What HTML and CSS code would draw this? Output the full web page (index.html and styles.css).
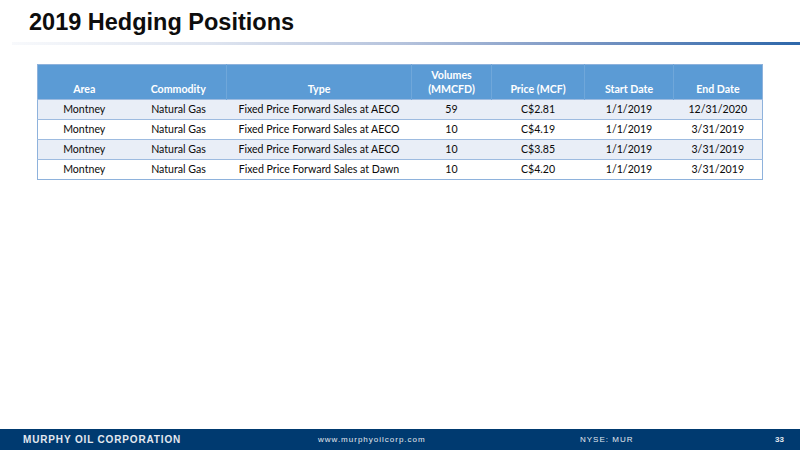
FILE: index.html
```html
<!DOCTYPE html>
<html>
<head>
<meta charset="utf-8">
<link rel="stylesheet" href="styles.css">
</head>
<body>
<div class="slide">
  <header class="head">
    <h1 class="title">2019 Hedging Positions</h1>
    <div class="rule"></div>
  </header>
  <main class="content">
    <table class="hedge">
      <colgroup>
        <col class="c-area"><col class="c-comm"><col class="c-type"><col class="c-vol"><col class="c-price"><col class="c-start"><col class="c-end">
      </colgroup>
      <thead>
        <tr>
          <th>Area</th>
          <th class="nosep">Commodity</th>
          <th>Type</th>
          <th>Volumes<br>(MMCFD)</th>
          <th>Price (MCF)</th>
          <th>Start Date</th>
          <th>End Date</th>
        </tr>
      </thead>
      <tbody>
        <tr class="alt"><td>Montney</td><td>Natural Gas</td><td>Fixed Price Forward Sales at AECO</td><td>59</td><td>C$2.81</td><td>1/1/2019</td><td>12/31/2020</td></tr>
        <tr><td>Montney</td><td>Natural Gas</td><td>Fixed Price Forward Sales at AECO</td><td>10</td><td>C$4.19</td><td>1/1/2019</td><td>3/31/2019</td></tr>
        <tr class="alt"><td>Montney</td><td>Natural Gas</td><td>Fixed Price Forward Sales at AECO</td><td>10</td><td>C$3.85</td><td>1/1/2019</td><td>3/31/2019</td></tr>
        <tr><td>Montney</td><td>Natural Gas</td><td>Fixed Price Forward Sales at Dawn</td><td>10</td><td>C$4.20</td><td>1/1/2019</td><td>3/31/2019</td></tr>
      </tbody>
    </table>
  </main>
  <footer class="foot">
    <span class="corp">MURPHY OIL CORPORATION</span>
    <span class="web">www.murphyoilcorp.com</span>
    <span class="nyse">NYSE: MUR</span>
    <span class="page">33</span>
  </footer>
</div>
</body>
</html>
```
FILE: styles.css
```css
html, body {
  margin: 0;
  padding: 0;
  background: #ffffff;
}
.slide {
  width: 800px;
  height: 450px;
  display: flex;
  flex-direction: column;
  overflow: hidden;
}
.head {
  padding-top: 8px;
}
.title {
  margin: 0 0 0 29px;
  font-family: "Liberation Sans", Arial, sans-serif;
  font-weight: bold;
  font-size: 23.5px;
  line-height: 28px;
  color: #0d0d0d;
}
.rule {
  margin-top: 6px;
  margin-left: 12px;
  height: 3px;
  background: linear-gradient(to right, rgba(230,235,244,0.3) 0%, #dfe5f0 25%, #b4c2dc 50%, #7b97c4 72%, #2d67aa 100%);
}
.content {
  flex: 1;
  padding: 19px 0 0 37px;
}
.hedge {
  width: 726px;
  border-collapse: collapse;
  font-family: Lato, "Open Sans", sans-serif;
  font-size: 10.6px;
  color: #0a0a0a;
  border: 1px solid #8eb2dc;
}
.c-area { width: 93px; }
.c-comm { width: 96px; }
.c-type { width: 185px; }
.c-vol { width: 80px; }
.c-price { width: 93px; }
.c-start { width: 89px; }
.c-end { width: 89px; }
.hedge th {
  background: #5b9bd5;
  color: #ffffff;
  font-weight: bold;
  height: 31px;
  padding: 0 0 3px;
  vertical-align: bottom;
  text-align: center;
  line-height: 14px;
  border-left: 1px solid #6fa7da;
}
.hedge th:first-child,
.hedge th.nosep {
  border-left: none;
}
.hedge td {
  height: 19px;
  padding: 0;
  text-align: center;
  border-top: 1px solid #9dbbe0;
  line-height: 19px;
}
.hedge tr.alt td {
  background: #e9eef7;
}
.foot {
  height: 21px;
  background: #003a70;
  display: flex;
  align-items: center;
  color: #e3e8ef;
  font-family: "Liberation Sans", Arial, sans-serif;
}
.corp {
  margin-left: 23px;
  font-weight: bold;
  font-size: 10px;
  letter-spacing: 0.85px;
  width: 295px;
}
.web {
  font-size: 8px;
  letter-spacing: 1px;
  width: 262px;
}
.nyse {
  font-size: 8px;
  letter-spacing: 1px;
  width: 195px;
}
.page {
  font-size: 8px;
  font-weight: bold;
}
```
